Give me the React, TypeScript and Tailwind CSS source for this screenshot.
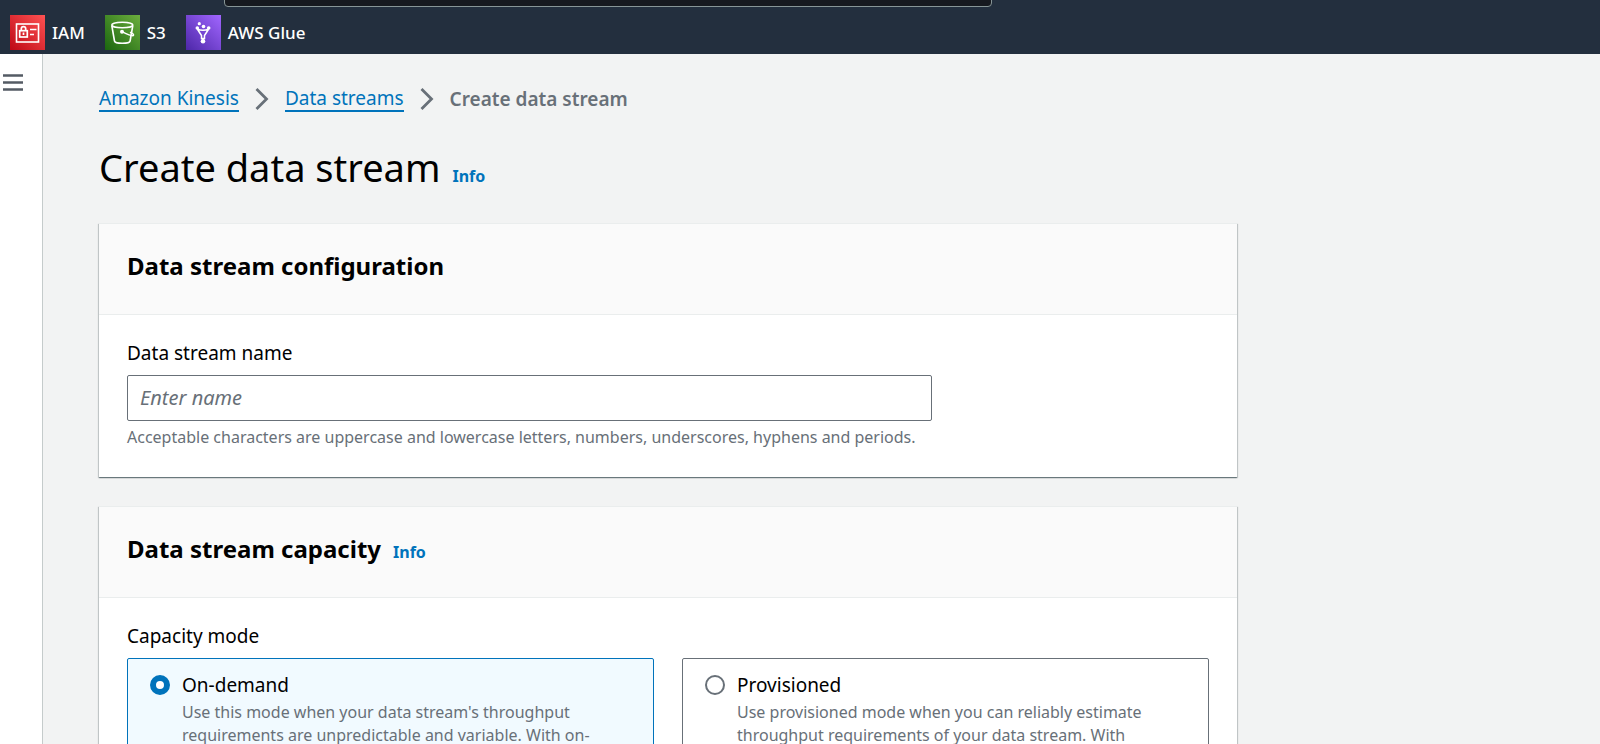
import type { ReactNode } from "react";

const services = [
  { name: "IAM", icon: <IamIcon /> },
  { name: "S3", icon: <S3Icon /> },
  { name: "AWS Glue", icon: <GlueIcon /> },
];

const capacityModes = [
  {
    id: "on-demand",
    title: "On-demand",
    description:
      "Use this mode when your data stream's throughput requirements are unpredictable and variable. With on-demand mode, your data stream's capacity scales automatically.",
  },
  {
    id: "provisioned",
    title: "Provisioned",
    description:
      "Use provisioned mode when you can reliably estimate throughput requirements of your data stream. With provisioned mode, your data stream's capacity is fixed.",
  },
];

function IamIcon() {
  return (
    <svg viewBox="0 0 35 35" className="size-[35px]" fill="none" stroke="#fff">
      <defs>
        <linearGradient id="iam" x1="0" y1="1" x2="1" y2="0">
          <stop offset="0" stopColor="#bd0816" />
          <stop offset="1" stopColor="#ff5252" />
        </linearGradient>
      </defs>
      <rect width="35" height="35" fill="url(#iam)" stroke="none" />
      <rect x="6.5" y="9" width="22" height="18" strokeWidth="1.6" />
      <rect x="9.7" y="15.7" width="7.6" height="6.300" strokeWidth="1.7" />
      <path d="M11.300 15.500v-1.700a2.200 2.200 0 0 1 4.400 0v1.700M13.500 17.500v2.500" strokeWidth="1.7" />
      <path d="M20 14.500h6.500M20 19.500h4" strokeWidth="1.6" />
    </svg>
  );
}

function S3Icon() {
  return (
    <svg viewBox="0 0 35 35" className="size-[35px]" fill="none" stroke="#fff">
      <defs>
        <linearGradient id="s3" x1="0" y1="1" x2="1" y2="0">
          <stop offset="0" stopColor="#1b660f" />
          <stop offset="1" stopColor="#6cae3e" />
        </linearGradient>
      </defs>
      <rect width="35" height="35" fill="url(#s3)" stroke="none" />
      <ellipse cx="17.300" cy="10" rx="10.500" ry="2.800" strokeWidth="1.6" />
      <path d="M6.800 10.500l2.700 15.500c.5 3 15.100 3 15.600 0l2.700-15.500" strokeWidth="1.6" />
      <path d="M17 16.700c4 2.300 11 5 11.500 3.500s-3-2.700-3.500-2.900" strokeWidth="1.5" />
      <circle cx="17" cy="16.700" r="2" fill="#fff" stroke="none" />
    </svg>
  );
}

function GlueIcon() {
  return (
    <svg viewBox="0 0 35 35" className="size-[35px]" fill="none" stroke="#fff">
      <defs>
        <linearGradient id="glue" x1="0" y1="1" x2="1" y2="0">
          <stop offset="0" stopColor="#4d27a8" />
          <stop offset="1" stopColor="#a166ff" />
        </linearGradient>
      </defs>
      <rect width="35" height="35" fill="url(#glue)" stroke="none" />
      <path d="M11.300 14l4.200 6.500v3h3v-3l4.200-6.500M11.300 14q5.700 2.500 11.400 0" strokeWidth="1.5" />
      <path d="M17 23.500v3" strokeWidth="1.5" />
      <g fill="#fff" stroke="none">
        <circle cx="11.300" cy="13" r="1.800" />
        <circle cx="22.700" cy="13" r="1.800" />
        <circle cx="17.500" cy="11.500" r="1.800" />
        <circle cx="13.300" cy="8.700" r="1.600" />
        <circle cx="17" cy="26.300" r="2.300" />
      </g>
    </svg>
  );
}

function Chevron() {
  return (
    <svg viewBox="0 0 14 22" className="h-[22px] w-[14px]" fill="none" stroke="#687078" strokeWidth="2.800">
      <path d="M1.500 1l10 10-10 10" />
    </svg>
  );
}

function InfoLink() {
  return (
    <a href="#info" className="text-base font-bold text-[#0073bb]">
      Info
    </a>
  );
}

function Panel({ title, info, children }: { title: string; info?: boolean; children: ReactNode }) {
  return (
    <section className="bg-white shadow-[0_1px_1px_0_rgba(0,28,36,0.4),1px_1px_1px_0_rgba(0,28,36,0.15),-1px_1px_1px_0_rgba(0,28,36,0.15)]">
      <div className="flex items-baseline gap-3 border-y border-[#eaeded] bg-[#fafafa] px-7 pt-6 pb-[30px]">
        <h2 className="text-2xl leading-9 font-bold">{title}</h2>
        {info && <InfoLink />}
      </div>
      <div className="px-7 pt-6 pb-7">{children}</div>
    </section>
  );
}

export default function App() {
  return (
    <div className="flex h-screen flex-col overflow-hidden bg-[#f2f3f3] font-['Noto_Sans',sans-serif] text-black">
      <header className="bg-[#232f3e]">
        <div className="flex h-[7px] items-end overflow-hidden">
          <input
            type="search"
            aria-label="Search"
            className="ml-[14%] h-10 w-[48%] shrink-0 rounded-sm border border-[#879596] bg-[#16191f]"
          />
        </div>
        <nav className="flex h-[47px] items-center gap-5 px-[10px] pt-1">
          {services.map((service) => (
            <a
              key={service.name}
              href="#service"
              className="flex items-center gap-[7px] text-[17px] font-medium text-white"
            >
              {service.icon}
              {service.name}
            </a>
          ))}
        </nav>
      </header>

      <div className="flex min-h-0 flex-1">
        <aside className="w-[43px] shrink-0 border-r border-[#c5cbcb] bg-white pt-[18px] pl-[3px]">
          <button type="button" aria-label="Open navigation" className="block">
            <svg viewBox="0 0 20 20" className="size-5" stroke="#545b64" strokeWidth="2.500">
              <path d="M0 3.500h20M0 10.500h20M0 17.500h20" />
            </svg>
          </button>
        </aside>

        <main className="min-w-0 flex-1 overflow-hidden pt-[29px] pr-7 pl-14">
          <nav aria-label="Breadcrumb" className="flex items-center gap-4 text-[19px] leading-8">
            <a href="#kinesis" className="border-b-2 border-[#0073bb] leading-6 text-[#0073bb]">
              Amazon Kinesis
            </a>
            <Chevron />
            <a href="#streams" className="border-b-2 border-[#0073bb] leading-6 text-[#0073bb]">
              Data streams
            </a>
            <Chevron />
            <span className="font-semibold text-[#687078]">Create data stream</span>
          </nav>

          <div className="mt-6 flex items-baseline gap-3">
            <h1 className="text-[38px] leading-[56px]">Create data stream</h1>
            <InfoLink />
          </div>

          <div className="mt-7 flex max-w-[1138px] flex-col gap-[29px]">
            <Panel title="Data stream configuration">
              <label htmlFor="stream-name" className="block text-[19px] leading-7">
                Data stream name
              </label>
              <input
                id="stream-name"
                placeholder="Enter name"
                className="mt-2 block h-[46px] w-full max-w-[805px] rounded-xs border border-[#687078] px-3 pb-0.5 text-xl placeholder:text-[#687078] placeholder:italic"
              />
              <p className="mt-1 text-base text-[#687078]">
                Acceptable characters are uppercase and lowercase letters, numbers, underscores, hyphens and periods.
              </p>
            </Panel>

            <Panel title="Data stream capacity" info>
              <fieldset>
                <legend className="text-[19px] leading-7">Capacity mode</legend>
                <div className="mt-2 grid grid-cols-2 gap-7">
                  {capacityModes.map((mode, i) => (
                    <label
                      key={mode.id}
                      className="flex gap-3 rounded-xs border border-[#687078] px-[22px] py-3 has-checked:border-[#0073bb] has-checked:bg-[#f1faff]"
                    >
                      <input
                        type="radio"
                        name="capacity-mode"
                        defaultChecked={i === 0}
                        className="mt-1 size-5 shrink-0 appearance-none rounded-full border-2 border-[#687078] bg-white checked:border-[6px] checked:border-[#0073bb]"
                      />
                      <span>
                        <span className="block text-[19px] leading-7">{mode.title}</span>
                        <span className="mt-0.5 block text-base leading-[23px] text-[#687078]">
                          {mode.description}
                        </span>
                      </span>
                    </label>
                  ))}
                </div>
              </fieldset>
            </Panel>
          </div>
        </main>
      </div>
    </div>
  );
}
